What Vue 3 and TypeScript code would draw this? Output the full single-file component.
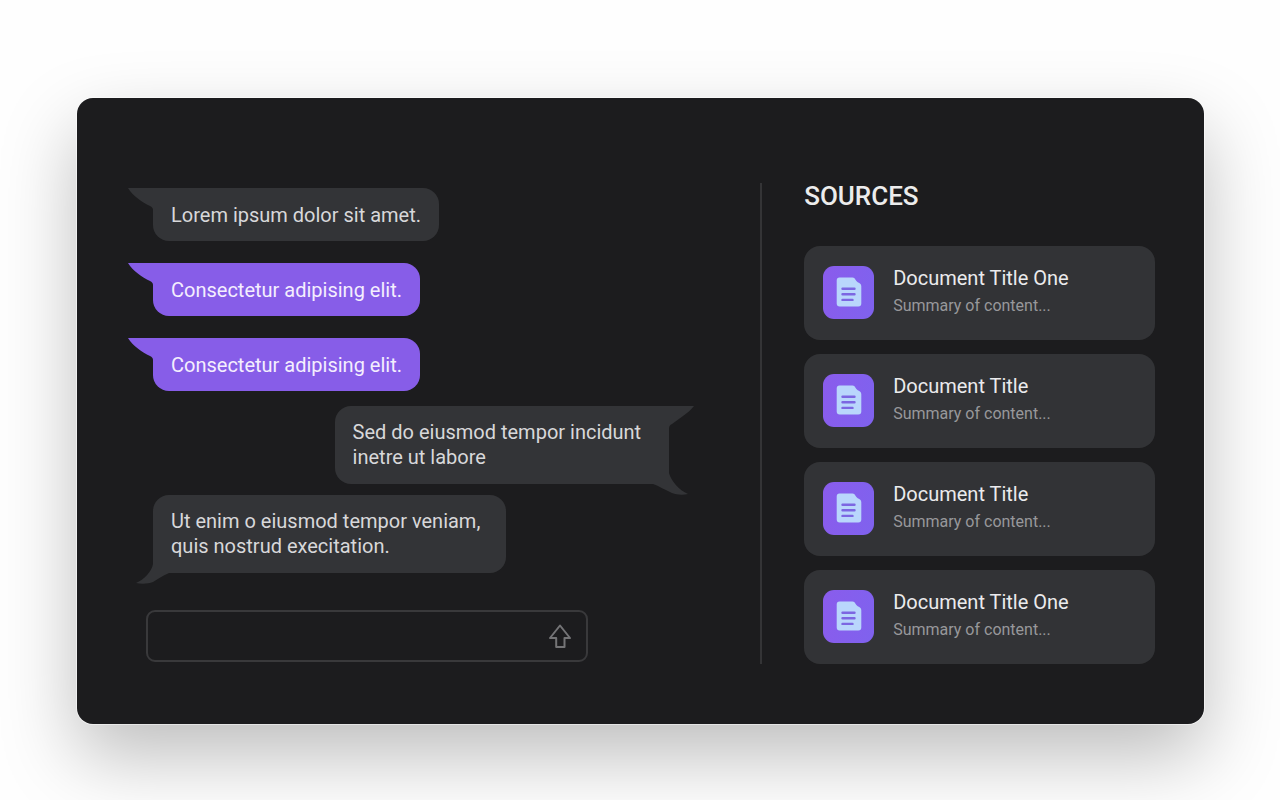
<script setup lang="ts">
import { ref } from 'vue'

type Tail = 'top-left' | 'top-right' | 'bottom-left' | 'bottom-right'

interface Message {
  id: number
  lines: string[]
  kind: 'plain' | 'accent'
  side: 'left' | 'right'
  tails: Tail[]
}

interface Source {
  id: number
  title: string
  summary: string
}

const messages: Message[] = [
  { id: 1, lines: ['Lorem ipsum dolor sit amet.'], kind: 'plain', side: 'left', tails: ['top-left'] },
  { id: 2, lines: ['Consectetur adipising elit.'], kind: 'accent', side: 'left', tails: ['top-left'] },
  { id: 3, lines: ['Consectetur adipising elit.'], kind: 'accent', side: 'left', tails: ['top-left'] },
  {
    id: 4,
    lines: ['Sed do eiusmod tempor incidunt', 'inetre ut labore'],
    kind: 'plain',
    side: 'right',
    tails: ['top-right', 'bottom-right'],
  },
  {
    id: 5,
    lines: ['Ut enim o eiusmod tempor veniam,', 'quis nostrud execitation.'],
    kind: 'plain',
    side: 'left',
    tails: ['bottom-left'],
  },
]

const sources: Source[] = [
  { id: 1, title: 'Document Title One', summary: 'Summary of content...' },
  { id: 2, title: 'Document Title', summary: 'Summary of content...' },
  { id: 3, title: 'Document Title', summary: 'Summary of content...' },
  { id: 4, title: 'Document Title One', summary: 'Summary of content...' },
]

const tailPaths: Record<Tail, string> = {
  'top-left': 'M0 0H44V30H25V22C25 20 24 19 22 18C14 14 5 8 0 0Z',
  'top-right': 'M44 0H0V30H19V23C19 20 20 19 22 18L33 10C37 7 41 4 44 0Z',
  'bottom-left': 'M18 0V10C17 17 9 26 1 29C6 30 13 30 18 28C23 25 27 22 34 19H44V0Z',
  'bottom-right': 'M25 0V8C27 16 35 25 44 29C39 30 33 30 28 28C21 25 15 21 9 19H0V0Z',
}

const draft = ref('')
</script>

<template>
  <main class="window">
    <section class="chat" aria-label="Chat">
      <div class="messages">
        <div
          v-for="message in messages"
          :key="message.id"
          class="bubble"
          :class="[message.kind, message.side, ...message.tails]"
        >
          <svg
            v-for="tail in message.tails"
            :key="tail"
            class="tail"
            :class="`tail-${tail}`"
            viewBox="0 0 44 30"
            aria-hidden="true"
          >
            <path :d="tailPaths[tail]" />
          </svg>
          <p class="text">
            <span v-for="line in message.lines" :key="line" class="line">{{ line }}</span>
          </p>
        </div>
      </div>
      <form class="composer" @submit.prevent="draft = ''">
        <input v-model="draft" class="field" type="text" aria-label="Message" />
        <button class="send" type="submit" aria-label="Send">
          <svg viewBox="0 0 24 26" aria-hidden="true">
            <path d="M12 2.500L22 15H16.500V24H8.200V15H2Z" />
          </svg>
        </button>
      </form>
    </section>

    <aside class="sources">
      <h2 class="heading">SOURCES</h2>
      <ul class="list">
        <li v-for="source in sources" :key="source.id" class="card">
          <span class="icon">
            <svg viewBox="0 0 26 30" aria-hidden="true">
              <path
                class="sheet"
                d="M3.500 .5H16.500C18 .5 18.600 1.300 19.500 2.800C20.400 4.300 21.300 5 22.800 5.800C24.600 6.700 25.300 7.600 25.300 9.500V26.500Q25.300 29.500 22.300 29.500H3.700Q.7 29.500 .7 26.500V3.500Q.7 .5 3.500 .5Z"
              />
              <path class="rule" d="M6.500 11.700H18.500M6.500 17.200H18.500M6.500 22.900H16.500" />
            </svg>
          </span>
          <div class="info">
            <h3 class="title">{{ source.title }}</h3>
            <p class="summary">{{ source.summary }}</p>
          </div>
        </li>
      </ul>
    </aside>
  </main>
</template>

<style>
body {
  margin: 0;
  background: #fefefe;
}
</style>

<style scoped>
.window {
  display: grid;
  grid-template-columns: minmax(0, 14fr) minmax(0, 9fr);
  box-sizing: border-box;
  margin: 98px 76px 76px 77px;
  padding: 85px 49px 60px 69px;
  border-radius: 16px;
  background: #1c1c1e;
  box-shadow:
    0 0 0 1px rgba(255, 255, 255, 0.5),
    0 32px 76px rgba(0, 0, 0, 0.26);
  font-family: Roboto, "Liberation Sans", sans-serif;
}

.chat {
  display: flex;
  flex-direction: column;
  padding-top: 5px;
}

.messages {
  display: flex;
  flex-direction: column;
  align-items: flex-start;
  gap: 22px;
  padding: 0 91px 0 7px;
}

.bubble {
  position: relative;
  padding: 14px 18px;
  border-radius: 16px;
  background: #333437;
  color: #d8d8da;
  fill: #333437;
}

.bubble.accent {
  background: #875de8;
  color: #f4eefe;
  fill: #875de8;
}

.bubble.right {
  align-self: flex-end;
  margin-top: -7px;
  padding-right: 28px;
}

.bubble.bottom-left {
  margin-top: -11px;
  padding-right: 26px;
}

.bubble.top-left {
  padding-top: 15px;
  padding-bottom: 13px;
  border-top-left-radius: 0;
}

.bubble.top-right {
  border-top-right-radius: 0;
  border-bottom-right-radius: 0;
}

.bubble.bottom-left {
  border-bottom-left-radius: 0;
}

.tail {
  position: absolute;
  width: 44px;
  height: 30px;
}

.tail-top-left {
  top: 0;
  left: -25px;
}

.tail-top-right {
  top: 0;
  right: -25px;
}

.tail-bottom-left {
  bottom: -11px;
  left: -18px;
}

.tail-bottom-right {
  right: -19px;
  bottom: -11px;
}

.text {
  position: relative;
  margin: 0;
  font-size: 20px;
  line-height: 25px;
}

.line {
  display: block;
  white-space: nowrap;
}

.composer {
  display: flex;
  align-items: center;
  box-sizing: border-box;
  width: 72%;
  height: 52px;
  margin-top: 37px;
  padding: 0 14px 0 16px;
  border: 2px solid #39393b;
  border-radius: 9px;
}

.field {
  flex: 1;
  min-width: 0;
  padding: 0;
  border: 0;
  outline: 0;
  background: none;
  color: #d8d8da;
  font: inherit;
  font-size: 20px;
}

.send {
  display: flex;
  padding: 0;
  border: 0;
  background: none;
  cursor: pointer;
}

.send svg {
  width: 24px;
  height: 26px;
  fill: none;
  stroke: #747476;
  stroke-width: 2;
  stroke-linejoin: round;
}

.sources {
  padding-left: 42px;
  border-left: 2px solid #343436;
}

.heading {
  margin: 0 0 37px;
  color: #ececec;
  font-size: 26px;
  font-weight: 500;
  line-height: 26px;
}

.list {
  display: flex;
  flex-direction: column;
  gap: 14px;
  margin: 0;
  padding: 0;
  list-style: none;
}

.card {
  display: flex;
  align-items: center;
  gap: 19px;
  box-sizing: border-box;
  min-height: 94px;
  padding: 18px 19px 20px;
  border-radius: 16px;
  background: #323336;
}

.icon {
  display: flex;
  flex: none;
  align-items: center;
  justify-content: center;
  width: 51px;
  height: 53px;
  border-radius: 11px;
  background: linear-gradient(100deg, #8a5cec, #7f62ee);
}

.icon svg {
  width: 26px;
  height: 30px;
}

.sheet {
  fill: #b9d6fc;
}

.rule {
  fill: none;
  stroke: #7c66e2;
  stroke-width: 2.400;
  stroke-linecap: round;
}

.title {
  margin: 0;
  color: #ebebed;
  font-size: 20px;
  font-weight: 400;
  line-height: 27px;
}

.summary {
  margin: 0;
  color: #98989b;
  font-size: 16px;
  line-height: 27px;
}
</style>
